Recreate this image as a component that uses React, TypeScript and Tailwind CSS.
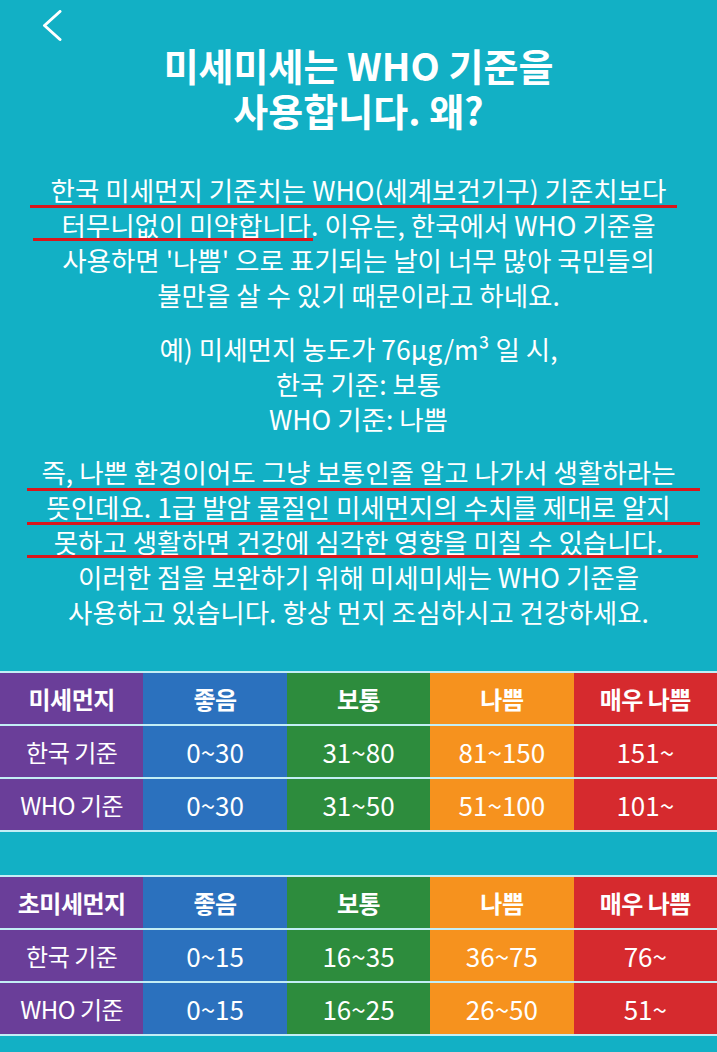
import React from "react";

type Bar = string;

const cols = [
  "bg-[#6a3e99]",
  "bg-[#2b71be]",
  "bg-[#2d8c3d]",
  "bg-[#f6921e]",
  "bg-[#d62a2e]",
];

function Line({ text, bar }: { text: string; bar?: Bar }) {
  return (
    <div className="relative h-[35px] leading-[35px] whitespace-nowrap">
      {text}
      {bar && <div className={"absolute h-[3px] bg-[#d9161c] " + bar} />}
    </div>
  );
}

function Table({ title, rows }: { title: string; rows: string[][] }) {
  const header = [title, "좋음", "보통", "나쁨", "매우 나쁨"];
  return (
    <div className="flex flex-col gap-[2px] py-[2px] bg-[#c3eef5]">
      <div className="grid grid-cols-5 h-[51px]">
        {header.map((h, i) => (
          <div
            key={i}
            className={"flex items-center justify-center text-[24px] font-bold tracking-[-0.5px] " + cols[i]}
          >
            {h}
          </div>
        ))}
      </div>
      {rows.map((r, ri) => (
        <div key={ri} className="grid grid-cols-5 h-[51px]">
          {r.map((c, i) => (
            <div
              key={i}
              className={
                "flex items-center justify-center " +
                (i === 0 ? "text-[24px] tracking-[-0.5px] " : "text-[26px] ") +
                cols[i]
              }
            >
              {c}
            </div>
          ))}
        </div>
      ))}
    </div>
  );
}

export default function App() {
  return (
    <div className="min-h-screen w-[717px] bg-[#12b0c5] text-white font-['Noto_Sans_CJK_KR',sans-serif] overflow-hidden">
      {/* back */}
      <div className="h-[42px] pl-[42px] pt-[10px]">
        <svg width="20" height="32" viewBox="0 0 20 32" fill="none">
          <path d="M18 1.5 L2.5 15.5 L18 29.5" stroke="white" strokeWidth="3" strokeLinecap="round" strokeLinejoin="round" />
        </svg>
      </div>

      {/* title */}
      <h1 className="text-center text-[38px] font-bold">
        <div className="h-[45px] leading-[45px]">미세미세는 WHO 기준을</div>
        <div className="h-[45px] leading-[45px]">사용합니다. 왜?</div>
      </h1>

      {/* body */}
      <div className="mt-[40px] text-center text-[26.5px]">
        <Line text="한국 미세먼지 기준치는 WHO(세계보건기구) 기준치보다" bar="left-[30px] w-[647px] top-[33px]" />
        <Line text="터무니없이 미약합니다. 이유는, 한국에서 WHO 기준을" bar="left-[33px] w-[280px] top-[31px]" />
        <Line text="사용하면 '나쁨' 으로 표기되는 날이 너무 많아 국민들의" />
        <Line text="불만을 살 수 있기 때문이라고 하네요." />

        <div className="mt-[19px]">
          <Line text="예) 미세먼지 농도가 76μg/m³ 일 시," />
          <Line text="한국 기준: 보통" />
          <Line text="WHO 기준: 나쁨" />
        </div>

        <div className="mt-[18px]">
          <Line text="즉, 나쁜 환경이어도 그냥 보통인줄 알고 나가서 생활하라는" bar="left-[27px] w-[673px] top-[34px]" />
          <Line text="뜻인데요. 1급 발암 물질인 미세먼지의 수치를 제대로 알지" bar="left-[27px] w-[673px] top-[33px]" />
          <Line text="못하고 생활하면 건강에 심각한 영향을 미칠 수 있습니다." bar="left-[27px] w-[671px] top-[31px]" />
          <Line text="이러한 점을 보완하기 위해 미세미세는 WHO 기준을" />
          <Line text="사용하고 있습니다. 항상 먼지 조심하시고 건강하세요." />
        </div>
      </div>

      {/* tables */}
      <div className="mt-[42px]">
        <Table
          title="미세먼지"
          rows={[
            ["한국 기준", "0~30", "31~80", "81~150", "151~"],
            ["WHO 기준", "0~30", "31~50", "51~100", "101~"],
          ]}
        />
      </div>
      <div className="mt-[43px] pb-[17px]">
        <Table
          title="초미세먼지"
          rows={[
            ["한국 기준", "0~15", "16~35", "36~75", "76~"],
            ["WHO 기준", "0~15", "16~25", "26~50", "51~"],
          ]}
        />
      </div>
    </div>
  );
}
